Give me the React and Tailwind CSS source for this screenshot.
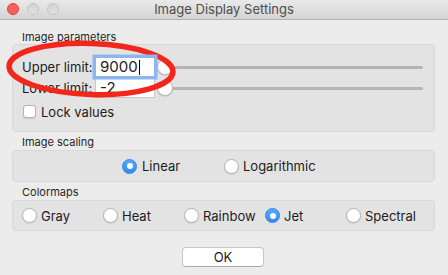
import React from "react";

function Radio({ checked }) {
  if (checked) {
    return (
      <span className="w-[15px] h-[15px] rounded-full bg-gradient-to-b from-[#59a9fb] to-[#2c8bf5] border border-[#2f86e8] flex items-center justify-center shrink-0">
        <span className="w-[6px] h-[6px] rounded-full bg-white" />
      </span>
    );
  }
  return (
    <span className="w-[15px] h-[15px] rounded-full bg-white border border-[#b3b3b3] shadow-[0_0.5px_1px_rgba(0,0,0,0.15)] shrink-0" />
  );
}

function Slider() {
  return (
    <div className="relative flex-1 h-[20px] ml-[2px] mr-[11px]">
      <div className="absolute left-[8px] right-0 top-[9px] h-[3px] rounded-full bg-[#b4b4b4]" />
      <div className="absolute left-0 top-[2px] w-[16px] h-[16px] rounded-full bg-white border border-[#bdbdbd] shadow-[0_0.5px_1px_rgba(0,0,0,0.2)]" />
    </div>
  );
}

export default function App() {
  return (
    <div className="relative w-[448px] h-[275px] bg-[#ececec] overflow-hidden font-['Inter','Liberation_Sans',sans-serif] text-[#1c1c1c]">
      {/* title bar */}
      <div className="relative h-[20px] bg-gradient-to-b from-[#e9e9e9] to-[#d4d4d4] border-b border-[#b3b3b3] flex items-center justify-center">
        <div className="absolute left-[7px] top-[3px] flex gap-[8px]">
          <span className="w-[12px] h-[12px] rounded-full bg-[#fc605c] border border-[#e0443e]" />
          <span className="w-[12px] h-[12px] rounded-full bg-gradient-to-b from-[#d3d3d3] to-[#e2e2e2] border border-[#c4c4c4]" />
          <span className="w-[12px] h-[12px] rounded-full bg-gradient-to-b from-[#d3d3d3] to-[#e2e2e2] border border-[#c4c4c4]" />
        </div>
        <span className="text-[13px] leading-[19px] text-[#4d4d4d]">Image Display Settings</span>
      </div>

      <div className="ml-[12px] w-[423px] flex flex-col">
        {/* Image parameters */}
        <div className="mt-[10px] h-[14px] pl-[10px] text-[11px] leading-[14px] text-[#262626]">Image parameters</div>
        <div className="h-[88px] rounded-[4px] border border-[#d8d8d8] bg-[#e3e3e3] pt-[12px] pl-[9px] flex flex-col">
          <div className="h-[20px] flex items-center">
            <span className="w-[73px] text-[13px] leading-[16px]">Upper limit:</span>
            <div className="relative z-10 w-[60px] h-[20px] bg-white border border-[#8fb5ea] shadow-[0_0_0_2.5px_#8ab6f2] flex items-center pl-[4px] text-[15px] leading-[18px]">
              <span>9000</span>
              <span className="w-[1px] h-[15px] bg-black ml-[1px]" />
            </div>
            <Slider />
          </div>
          <div className="mt-[1px] h-[20px] flex items-center">
            <span className="w-[73px] text-[13px] leading-[16px]">Lower limit:</span>
            <div className="w-[60px] h-[20px] bg-white border border-[#c8c8c8] border-t-[#b0b0b0] flex items-center pl-[4px] text-[15px] leading-[18px]">
              <span>-2</span>
            </div>
            <Slider />
          </div>
          <div className="mt-[7px] h-[13px] flex items-center pl-[1px]">
            <span className="w-[13px] h-[13px] rounded-[3px] bg-white border border-[#b5b5b5] shadow-[0_0.5px_1px_rgba(0,0,0,0.12)]" />
            <span className="ml-[5px] text-[13px] leading-[16px]">Lock values</span>
          </div>
        </div>

        {/* Image scaling */}
        <div className="h-[18px] pt-[4px] pl-[10px] text-[11px] leading-[13px] text-[#262626]">Image scaling</div>
        <div className="h-[32px] rounded-[4px] border border-[#d8d8d8] bg-[#e3e3e3] pl-[109px] flex items-center">
          <div className="w-[102px] flex items-center">
            <Radio checked />
            <span className="ml-[5px] text-[13px] leading-[16px]">Linear</span>
          </div>
          <div className="flex items-center">
            <Radio />
            <span className="ml-[4px] text-[13px] leading-[16px]">Logarithmic</span>
          </div>
        </div>

        {/* Colormaps */}
        <div className="h-[18px] pt-[4px] pl-[10px] text-[11px] leading-[13px] text-[#262626]">Colormaps</div>
        <div className="h-[31px] rounded-[4px] border border-[#d8d8d8] bg-[#e3e3e3] pl-[9px] flex items-center">
          {["Gray", "Heat", "Rainbow", "Jet", "Spectral"].map((n) => (
            <div key={n} className="w-[81px] flex items-center">
              <Radio checked={n === "Jet"} />
              <span className="ml-[4px] text-[13px] leading-[16px]">{n}</span>
            </div>
          ))}
        </div>

        <button className="mt-[16px] ml-[170px] w-[82px] h-[20px] rounded-[4px] bg-white border border-[#c6c6c6] border-b-[#acacac] text-[13px] leading-[16px] text-[#1c1c1c] flex items-center justify-center">
          OK
        </button>
      </div>

      {/* red annotation */}
      <svg className="absolute inset-0 pointer-events-none" width="448" height="275" viewBox="0 0 448 275">
        <ellipse cx="91" cy="69" rx="82" ry="25.5" transform="rotate(2 91 69)" fill="none" stroke="#f3261c" strokeWidth="5.5" />
      </svg>
    </div>
  );
}
